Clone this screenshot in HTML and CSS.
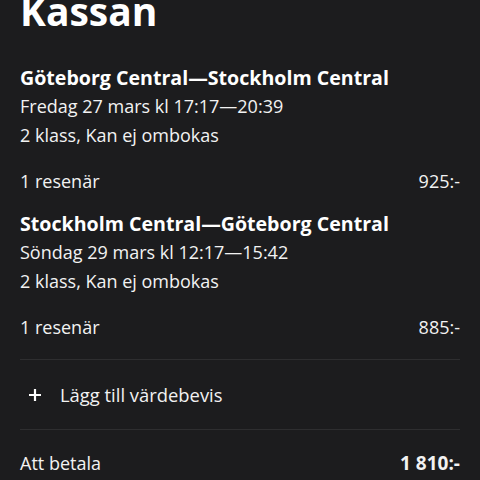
FILE: index.html
```html
<!DOCTYPE html>
<html lang="sv">
<head>
<meta charset="utf-8">
<link rel="stylesheet" href="styles.css">
</head>
<body>
<main class="page">
  <h1 class="title">Kassan</h1>
  <section class="trip">
    <h2 class="route">Göteborg Central—Stockholm Central</h2>
    <p class="line">Fredag 27 mars kl 17:17—20:39</p>
    <p class="line">2 klass, Kan ej ombokas</p>
    <div class="price-row"><span>1 resenär</span><span>925:-</span></div>
  </section>
  <section class="trip">
    <h2 class="route">Stockholm Central—Göteborg Central</h2>
    <p class="line">Söndag 29 mars kl 12:17—15:42</p>
    <p class="line">2 klass, Kan ej ombokas</p>
    <div class="price-row"><span>1 resenär</span><span>885:-</span></div>
  </section>
  <div class="add-row">
    <svg class="plus" width="14" height="14" viewBox="0 0 14 14"><path d="M7 1v12M1 7h12" stroke="#fff" stroke-width="2.2" stroke-linecap="butt"/></svg>
    <span>Lägg till värdebevis</span>
  </div>
  <div class="total-row"><span>Att betala</span><span class="total">1 810:-</span></div>
</main>
</body>
</html>
```
FILE: styles.css
```css
html, body {
  margin: 0;
  padding: 0;
  background: #1c1c1e;
  color: #f2f2f2;
  font-family: "Open Sans", "Noto Sans", sans-serif;
  overflow: hidden;
}
.page {
  padding: 0 20px;
}
.title {
  margin: -12px 0 0;
  font-size: 39px;
  line-height: 46px;
  font-weight: 700;
  color: #fff;
}
.trip {
  margin-top: 29px;
}
.trip + .trip {
  margin-top: 13px;
}
.route {
  margin: 0;
  font-size: 19.6px;
  font-weight: 700;
  line-height: 29px;
  color: #fff;
}
.line {
  margin: 0;
  font-size: 18px;
  line-height: 29px;
}
.price-row {
  display: flex;
  justify-content: space-between;
  font-size: 18px;
  line-height: 29px;
  margin-top: 17px;
}
.add-row {
  display: flex;
  align-items: center;
  gap: 18px;
  font-size: 18.4px;
  line-height: 29px;
  border-top: 1px solid #2e2e30;
  border-bottom: 1px solid #2e2e30;
  margin-top: 17px;
  padding: 20px 0 20px 8px;
}
.total-row {
  display: flex;
  justify-content: space-between;
  font-size: 18px;
  line-height: 29px;
  margin-top: 19px;
}
.total {
  font-weight: 700;
  font-size: 19px;
}
```
